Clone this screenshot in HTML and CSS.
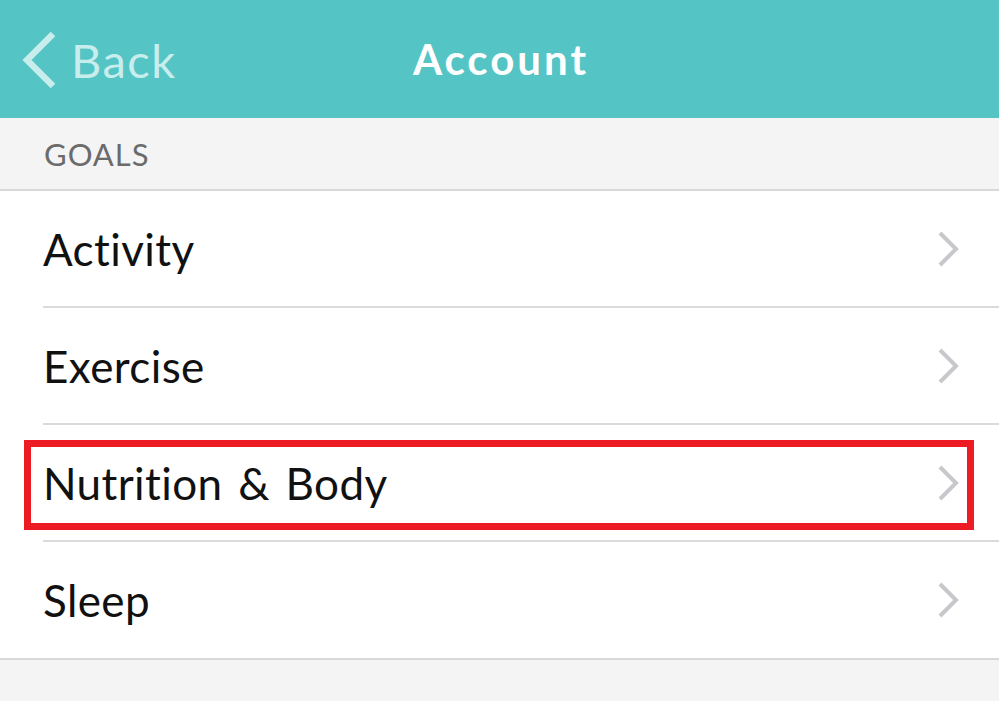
FILE: index.html
```html
<!DOCTYPE html>
<html>
<head>
<meta charset="utf-8">
<link rel="stylesheet" href="styles.css">
</head>
<body>
<div class="screen">
  <header class="navbar">
    <div class="back">
      <svg class="back-icon" width="36" height="58" viewBox="0 0 36 58"><path d="M32 3 L6 29 L32 55" fill="none" stroke="#c8eded" stroke-width="6.5"/></svg>
      <span class="back-label">Back</span>
    </div>
    <h1 class="title">Account</h1>
  </header>
  <div class="section-header">GOALS</div>
  <ul class="list">
    <li class="row"><span class="label">Activity</span><svg class="chev" width="22" height="36" viewBox="0 0 22 36"><path d="M3 2 L19 18 L3 34" fill="none" stroke="#c7c7cc" stroke-width="4"/></svg></li>
    <li class="row"><span class="label">Exercise</span><svg class="chev" width="22" height="36" viewBox="0 0 22 36"><path d="M3 2 L19 18 L3 34" fill="none" stroke="#c7c7cc" stroke-width="4"/></svg></li>
    <li class="row highlighted"><span class="label">Nutrition &amp; Body</span><svg class="chev" width="22" height="36" viewBox="0 0 22 36"><path d="M3 2 L19 18 L3 34" fill="none" stroke="#c7c7cc" stroke-width="4"/></svg><span class="mark"></span></li>
    <li class="row"><span class="label">Sleep</span><svg class="chev" width="22" height="36" viewBox="0 0 22 36"><path d="M3 2 L19 18 L3 34" fill="none" stroke="#c7c7cc" stroke-width="4"/></svg></li>
  </ul>
</div>
</body>
</html>
```
FILE: styles.css
```css
html, body { margin: 0; padding: 0; }
body {
  background: #f4f4f4;
  font-family: "Lato", "Open Sans", sans-serif;
  width: 999px;
  height: 701px;
  overflow: hidden;
}
.screen { width: 999px; }
.navbar {
  height: 118px;
  background: #55c4c5;
  display: flex;
  align-items: center;
  justify-content: center;
  position: relative;
}
.back {
  position: absolute;
  left: 21px;
  top: 31px;
  display: flex;
  align-items: center;
  gap: 14px;
}
.back-icon { display: block; }
.back-label {
  font-size: 47px;
  color: #c8eded;
  line-height: 58px;
  letter-spacing: 1.5px;
}
.title {
  margin: 0;
  font-size: 42px;
  font-weight: 700;
  color: #ffffff;
  letter-spacing: 3px;
  padding-left: 3px;
}
.section-header {
  height: 73px;
  box-sizing: border-box;
  padding-left: 44px;
  display: flex;
  align-items: center;
  font-size: 31px;
  color: #6b6b6b;
  letter-spacing: 1px;
  border-bottom: 2px solid #d8d8d8;
}
.list {
  list-style: none;
  margin: 0;
  padding: 0 0 0 43px;
  background: #ffffff;
  border-bottom: 2px solid #d8d8d8;
}
.row {
  height: 117px;
  box-sizing: border-box;
  display: flex;
  align-items: center;
  justify-content: space-between;
  padding-right: 40px;
  border-bottom: 2px solid #dadada;
  position: relative;
}
.row:last-child { border-bottom: none; height: 116px; }
.label {
  font-size: 44px;
  color: #111111;
  letter-spacing: 0.4px;
  word-spacing: 4px;
}
.chev { display: block; }
.mark {
  position: absolute;
  left: -19px;
  top: 15px;
  width: 950px;
  height: 90px;
  box-sizing: border-box;
  border: 7px solid #ed1c24;
}
```
